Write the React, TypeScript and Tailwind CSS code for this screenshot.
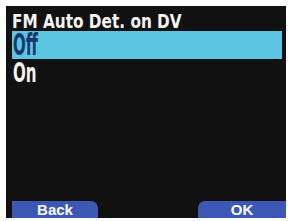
export default function App() {
  const dv = { fontFamily: '"DejaVu Sans", sans-serif' };
  return (
    <div className="w-[290px] h-[221px] bg-white pt-[6px] pl-[6px] pr-[4px] pb-[3px]">
      <div className="w-full h-full bg-[#111111] flex flex-col">
        <div className="h-[25px] pl-[6px] pt-[6px] text-[#f4f4f4] text-[19px] leading-[19px] whitespace-nowrap" style={dv}>
          <span className="block w-[180px] origin-left scale-x-[0.805] font-bold">FM Auto Det. on DV</span>
        </div>
        <div className="ml-[6px] mr-[4px] h-[28px] bg-[#5cc6e2] flex items-center pl-[1px]">
          <span className="block w-[40px] origin-left scale-x-[0.5] font-bold text-[#17386c] text-[30px] leading-[26px]" style={dv}>Off</span>
        </div>
        <div className="ml-[6px] h-[28px] flex items-center pl-[1px]">
          <span className="block w-[26px] origin-left scale-x-[0.58] font-bold text-[#f4f4f4] text-[26px] leading-[24px]" style={dv}>On</span>
        </div>
        <div className="flex-1" />
        <div className="flex justify-between items-end pl-[6px]">
          <div className="w-[86px] h-[17px] bg-[#3c58b4] rounded-tr-[7px] flex items-center justify-center text-white font-bold text-[15px] leading-[17px]" style={{ fontFamily: '"Liberation Sans", Arial, sans-serif' }}>Back</div>
          <div className="w-[88px] h-[17px] bg-[#3c58b4] rounded-tl-[7px] flex items-center justify-center text-white font-bold text-[15px] leading-[17px]" style={{ fontFamily: '"Liberation Sans", Arial, sans-serif' }}>OK</div>
        </div>
      </div>
    </div>
  );
}
